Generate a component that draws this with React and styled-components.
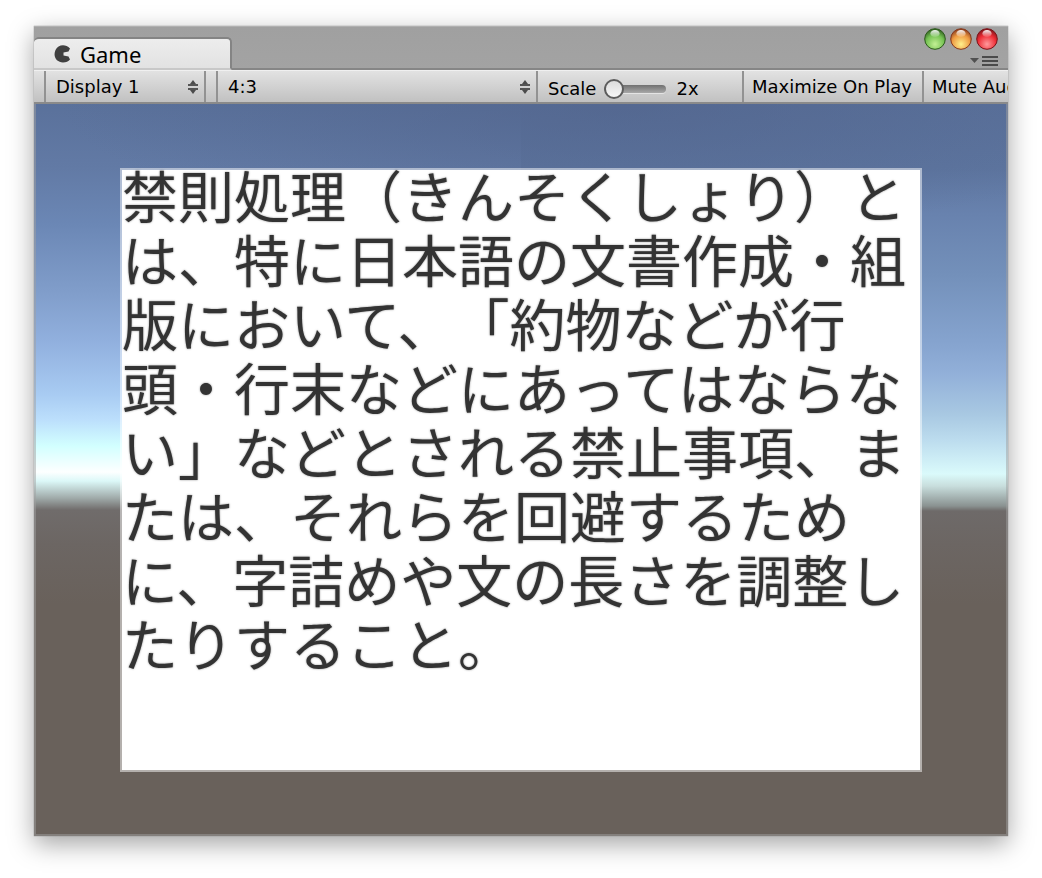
import React, { useState } from 'react'
import styled, { createGlobalStyle } from 'styled-components'

const GlobalStyle = createGlobalStyle`
  *, *::before, *::after {
    box-sizing: border-box;
  }
  body {
    margin: 0;
    background: #fff;
    color: #000;
    font-family: "DejaVu Sans", sans-serif;
    font-size: 18px;
  }
`

const Page = styled.div`
  padding: 26px 34px 42px;
`

const Window = styled.main`
  overflow: hidden;
  background: #a2a2a2;
  box-shadow: 0 0 1px #777, 0 8px 24px rgba(0, 0, 0, 0.36);
`

const Header = styled.header`
  display: flex;
  justify-content: space-between;
  height: 44px;
  border-top: 1px solid #b0b0b0;
  background: linear-gradient(#a0a0a0, #a3a3a3);
  box-shadow: inset 0 -2px #868686;
`

const Tab = styled.button`
  display: flex;
  align-items: center;
  gap: 8px;
  width: 198px;
  height: 33px;
  margin: 10px 0 0;
  padding: 0 20px;
  border: 2px solid #848484;
  border-left: 0;
  border-bottom-color: #c8c8c8;
  border-radius: 5px 5px 0 0;
  background: linear-gradient(#ededed, #e2e2e2);
  font-family: "Noto Sans", sans-serif;
  font-size: 22px;
  line-height: 28px;
`

const WindowActions = styled.div`
  display: flex;
  flex-direction: column;
  align-items: flex-end;
  gap: 5px;
  padding: 1px 10px 0 0;
`

const Lights = styled.div`
  display: flex;
  gap: 4px;
`

const IconButton = styled.button`
  display: block;
  padding: 0;
  border: 0;
  background: none;

  svg {
    display: block;
  }
`

const Toolbar = styled.div`
  display: flex;
  height: 34px;
  padding-left: 10px;
  border-top: 1px solid #f0f0f0;
  border-bottom: 2px solid #8a8a8a;
  background: linear-gradient(#e2e2e2, #c1c1c1);
`

const Cell = styled.div`
  flex: ${props => props.$grow ? '1 1 0' : `0 0 ${props.$width}px`};
  min-width: 0;
  display: flex;
  align-items: center;
  overflow: hidden;
  border-left: 2px solid #929292;
`

const Picker = styled.label`
  flex: 1;
  display: grid;
  align-items: center;

  select, svg {
    grid-area: 1 / 1;
  }
  svg {
    justify-self: end;
    margin-right: 6px;
    pointer-events: none;
  }
`

const Select = styled.select`
  appearance: none;
  width: 100%;
  height: 30px;
  padding: 0 10px;
  border: 0;
  background: none;
  color: #000;
  font: inherit;
`

const ScaleLabel = styled.label`
  display: flex;
  align-items: center;
  gap: 8px;
  padding: 4px 10px 0;
`

const Slider = styled.input`
  appearance: none;
  width: 62px;
  height: 20px;
  margin: 0 2px 0 0;
  background: none;

  &::-webkit-slider-runnable-track {
    height: 8px;
    border-radius: 4px;
    background: linear-gradient(#707070, #a8a8a8);
    box-shadow: 0 1px #e4e4e4;
  }
  &::-webkit-slider-thumb {
    appearance: none;
    width: 20px;
    height: 20px;
    margin-top: -6px;
    border: 2px solid #5c5c5c;
    border-radius: 50%;
    background: linear-gradient(#dcdcdc, #f6f6f6);
  }
`

const ToolButton = styled.button`
  height: 30px;
  padding: 0 8px;
  border: 0;
  background: none;
  color: #000;
  font: inherit;
  white-space: nowrap;
`

const Scene = styled.section`
  padding: 64px 84px 62px;
  border: solid rgba(160, 160, 160, 0.5);
  border-width: 0 2px 2px;
  background:
    radial-gradient(ellipse 560px 130px at 60% 0, rgba(80, 98, 138, 0.6), rgba(80, 98, 138, 0)) border-box,
    linear-gradient(
      #5a719b 0,
      #5d759f 64px,
      #6882ae 110px,
      #7390ba 170px,
      #86a4cf 240px,
      #92b0d9 270px,
      #a8c8e2 310px,
      #bcdcee 336px,
      #dafafb 370px,
      #c8dedd 382px,
      #8a9291 402px,
      #6e6a69 407px,
      #6c6663 440px,
      #69615b 500px
    ) right / 50% 100% no-repeat border-box,
    linear-gradient(
      #5a719b 0,
      #627aa5 64px,
      #6b87b5 120px,
      #819ecb 190px,
      #92b1df 240px,
      #a8cbf2 290px,
      #bcdffc 316px,
      #d2ffff 342px,
      #fdffff 368px,
      #dcf8f8 377px,
      #a0abaa 394px,
      #706c6b 406px,
      #6c6663 440px,
      #69615b 500px
    ) border-box;
`

const Canvas = styled.div`
  aspect-ratio: 401 / 302;
  border: 2px solid rgba(255, 255, 255, 0.5);
  background: #fff padding-box;
`

const Passage = styled.p`
  margin: -8px 0 0;
  color: #333;
  font-family: "Noto Sans CJK JP", sans-serif;
  font-size: 56px;
  line-height: 64px;
  text-shadow: 0 0 2px rgba(51, 51, 51, 0.6);
  text-spacing-trim: space-all;
`

const PacIcon = () => (
  <svg width="18" height="18" viewBox="0 0 18 18" aria-hidden="true">
    <path d="M16 3.5C11.5-1.5 4-.5 1.5 5C-1.5 12 3 17.5 9 17.5C12 17.5 14.500 16.500 16 14.500L14.500 11.500L9.500 10.500V7.500L14.500 6.500Z" fill="#404040" />
  </svg>
)

const Arrows = () => (
  <svg width="10" height="14" viewBox="0 0 10 14" aria-hidden="true">
    <path d="M5 0L8 4H2ZM5 14L8 10H2Z" fill="#4c4c4c" />
    <path d="M0 5H10M0 9H10" stroke="#555" strokeWidth="2" />
  </svg>
)

const Light = ({ name, edge, base, glow }) => (
  <IconButton aria-label={name}>
    <svg width="22" height="22" viewBox="0 0 22 22">
      <defs>
        <radialGradient id={name} cx="50%" cy="75%" r="75%">
          <stop offset="0" stopColor={glow} />
          <stop offset="0.6" stopColor={base} />
          <stop offset="1" stopColor={edge} />
        </radialGradient>
        <linearGradient id={`${name}-shine`} x2="0" y2="1">
          <stop offset="0" stopColor="#fff" stopOpacity="0.95" />
          <stop offset="1" stopColor="#fff" stopOpacity="0.1" />
        </linearGradient>
      </defs>
      <circle cx="11" cy="11" r="10.3" fill={`url(#${name})`} stroke={edge} strokeWidth="1" />
      <ellipse cx="11" cy="5.5" rx="4.6" ry="3.6" fill={`url(#${name}-shine)`} />
    </svg>
  </IconButton>
)

const MenuIcon = () => (
  <svg width="28" height="12" viewBox="0 0 28 12">
    <path d="M0 3H9L4.5 8Z" fill="#505050" />
    <path d="M12 2H28M12 6H28M12 10H28" stroke="#4a4a4a" strokeWidth="2" />
  </svg>
)

const App = () => {
  const [scale, setScale] = useState(2)

  return (
    <Page>
      <GlobalStyle />
      <Window>
        <Header>
          <Tab><PacIcon />Game</Tab>
          <WindowActions>
            <Lights>
              <Light name="minimize" edge="#2c5a1c" base="#74c152" glow="#c3f094" />
              <Light name="zoom" edge="#86381c" base="#ee9a42" glow="#fff08c" />
              <Light name="close" edge="#7c1218" base="#ee2c35" glow="#ff9a9c" />
            </Lights>
            <IconButton aria-label="Tab menu"><MenuIcon /></IconButton>
          </WindowActions>
        </Header>
        <Toolbar>
          <Cell $width={160}>
            <Picker>
              <Select aria-label="Display"><option>Display 1</option></Select>
              <Arrows />
            </Picker>
          </Cell>
          <Cell $width={12} />
          <Cell $grow>
            <Picker>
              <Select aria-label="Aspect ratio"><option>4:3</option></Select>
              <Arrows />
            </Picker>
          </Cell>
          <Cell $width={206}>
            <ScaleLabel>
              Scale
              <Slider
                type="range"
                min="2"
                max="10"
                value={scale}
                onChange={e => setScale(Number(e.target.value))}
              />
              <span>{scale}x</span>
            </ScaleLabel>
          </Cell>
          <Cell $width={180}><ToolButton>Maximize On Play</ToolButton></Cell>
          <Cell $width={86}><ToolButton>Mute Audio</ToolButton></Cell>
        </Toolbar>
        <Scene>
          <Canvas>
            <Passage lang="ja">
              禁則処理（きんそくしょり）とは、特に日本語の文書作成・組版において、「約物などが行頭・行末などにあってはならない」などとされる禁止事項、または、それらを回避するために、字詰めや文の長さを調整したりすること。
            </Passage>
          </Canvas>
        </Scene>
      </Window>
    </Page>
  )
}

export default App
